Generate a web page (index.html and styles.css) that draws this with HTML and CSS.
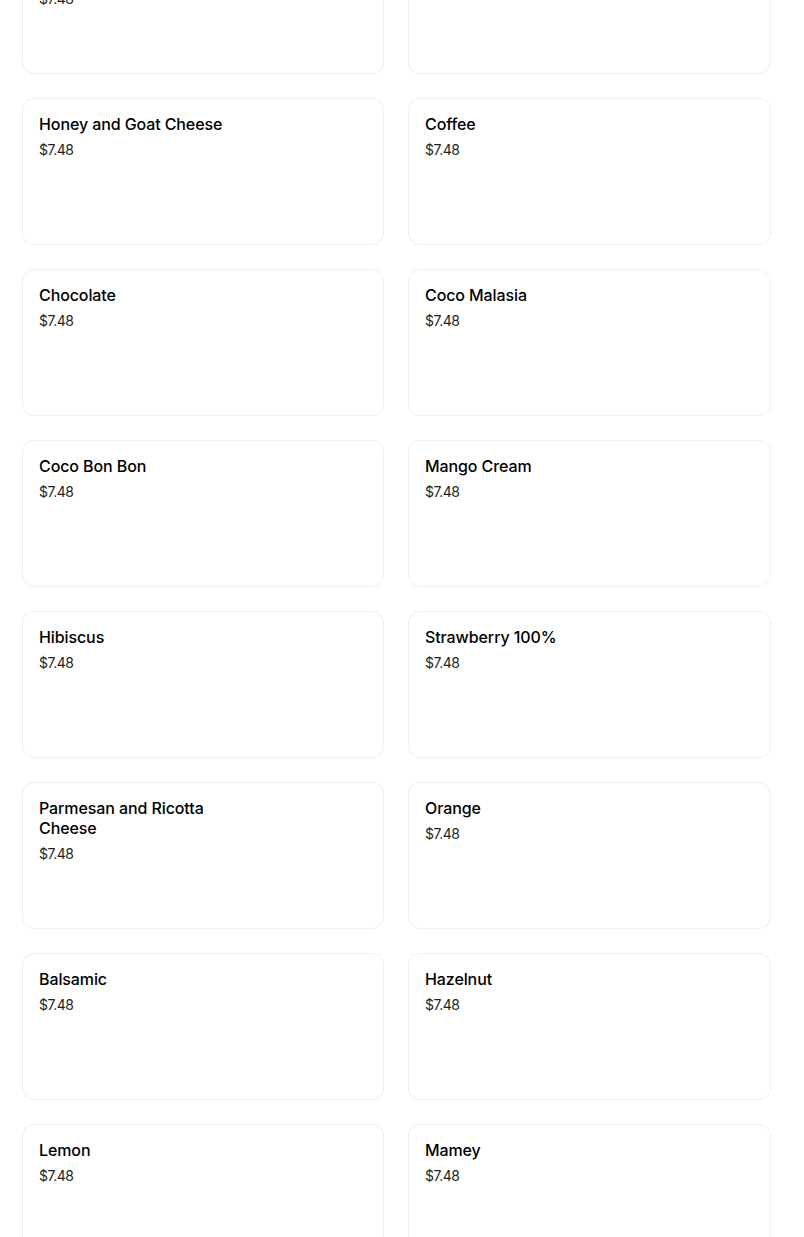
FILE: index.html
```html
<!DOCTYPE html>
<html>
<head>
<meta charset="utf-8">
<link rel="stylesheet" href="styles.css">
</head>
<body>
<div class="grid">
  <div class="card"><div class="info"><div class="name">Mascarpone with Red Berries</div><div class="price">$7.48</div></div></div>
  <div class="card"><div class="info"><div class="name">Cajeta</div><div class="price">$7.48</div></div></div>
  <div class="card"><div class="info"><div class="name">Honey and Goat Cheese</div><div class="price">$7.48</div></div></div>
  <div class="card"><div class="info"><div class="name">Coffee</div><div class="price">$7.48</div></div></div>
  <div class="card"><div class="info"><div class="name">Chocolate</div><div class="price">$7.48</div></div></div>
  <div class="card"><div class="info"><div class="name">Coco Malasia</div><div class="price">$7.48</div></div></div>
  <div class="card"><div class="info"><div class="name">Coco Bon Bon</div><div class="price">$7.48</div></div></div>
  <div class="card"><div class="info"><div class="name">Mango Cream</div><div class="price">$7.48</div></div></div>
  <div class="card"><div class="info"><div class="name">Hibiscus</div><div class="price">$7.48</div></div></div>
  <div class="card"><div class="info"><div class="name">Strawberry 100%</div><div class="price">$7.48</div></div></div>
  <div class="card"><div class="info"><div class="name">Parmesan and Ricotta Cheese</div><div class="price">$7.48</div></div></div>
  <div class="card"><div class="info"><div class="name">Orange</div><div class="price">$7.48</div></div></div>
  <div class="card"><div class="info"><div class="name">Balsamic</div><div class="price">$7.48</div></div></div>
  <div class="card"><div class="info"><div class="name">Hazelnut</div><div class="price">$7.48</div></div></div>
  <div class="card"><div class="info"><div class="name">Lemon</div><div class="price">$7.48</div></div></div>
  <div class="card"><div class="info"><div class="name">Mamey</div><div class="price">$7.48</div></div></div>
</div>
</body>
</html>
```

FILE: styles.css
```css
html, body {
  margin: 0;
  padding: 0;
  background: #ffffff;
  overflow: hidden;
}
body {
  font-family: "Inter", "Roboto", sans-serif;
  color: #000000;
}
.grid {
  display: grid;
  grid-template-columns: 362px 363px;
  column-gap: 24px;
  row-gap: 24px;
  margin: -73px 0 0 22px;
}
.card {
  box-sizing: border-box;
  height: 147px;
  border: 1px solid #efefef;
  border-radius: 12px;
  box-shadow: 0 0 1px rgba(0,0,0,0.04);
  padding: 15px 16px 16px;
  display: flex;
}
.info {
  max-width: 220px;
}
.name {
  font-size: 16px;
  font-weight: 500;
  line-height: 20px;
  letter-spacing: -0.1px;
  color: #000;
}
.price {
  margin-top: 6px;
  font-size: 14px;
  line-height: 20px;
  color: #1f1f1f;
  letter-spacing: -0.5px;
}
```
